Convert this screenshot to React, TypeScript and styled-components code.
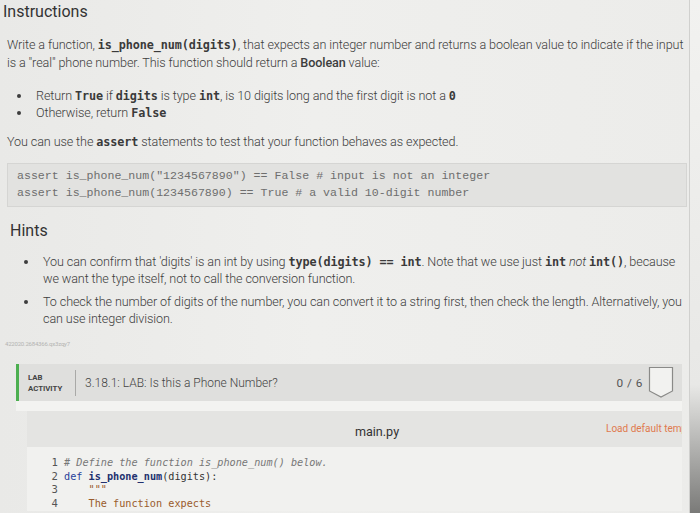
import React from 'react'
import styled, { createGlobalStyle } from 'styled-components'

const GlobalStyle = createGlobalStyle`
  html, body {
    margin: 0;
    padding: 0;
    background: #ebebe9;
  }
  body {
    font-family: Roboto, "Noto Sans", Arial, sans-serif;
    color: #3a3a3a;
    overflow: hidden;
  }
`

const Page = styled.div`
  display: flex;
  width: 700px;
  height: 513px;
  overflow: hidden;
  background: linear-gradient(90deg, #e9e9e7 0%, #efefed 45%, #ececea 100%);
`

const Content = styled.div`
  flex: 1;
  min-width: 0;
  padding-left: 3px;
`

const Edge = styled.div`
  width: 10px;
  border-left: 1px solid #d0d0ce;
  background: linear-gradient(180deg, #f2f2f0 0%, #e8e8e6 75%, #7a7a78 100%);
`

const Heading = styled.h2`
  margin: 0;
  padding-top: 2px;
  font-size: 16px;
  font-weight: 400;
  line-height: 20px;
  color: #333;
`

const Para = styled.p<{ $mt?: number }>`
  margin: ${({ $mt }) => $mt ?? 0}px 0 0 4px;
  font-size: 12.6px;
  font-weight: 300;
  line-height: 18px;
  color: #3d3d3d;
  letter-spacing: -0.1px;
`

const Code = styled.code`
  font-family: "DejaVu Sans Mono", monospace;
  font-size: 11.8px;
  font-weight: 700;
  line-height: 1;
  color: #3a3a3a;
`

const Bold = styled.b`
  font-weight: 500;
`

const List = styled.ul<{ $indent: number; $mt: number }>`
  margin: ${({ $mt }) => $mt}px 0 0 0;
  padding-left: ${({ $indent }) => $indent}px;
  list-style: disc;
  font-size: 12.6px;
  font-weight: 300;
  line-height: 17px;
  color: #3d3d3d;
  letter-spacing: -0.1px;
`

const Item = styled.li<{ $gap?: number }>`
  margin-top: ${({ $gap }) => $gap ?? 0}px;
  padding-left: 4px;
`

const CodeBlock = styled.pre`
  margin: 12px 2px 0 4px;
  padding: 3px 9px 5px;
  background: #e2e2e0;
  border: 1px solid #d5d5d3;
  font-family: "Liberation Mono", "Courier New", monospace;
  font-size: 11.6px;
  line-height: 17px;
  color: #6e6e6e;
`

const SubHeading = styled(Heading)`
  margin: 14px 0 0 7px;
  padding: 0;
`

const Stamp = styled.div`
  margin: 13px 0 0 2px;
  font-size: 6px;
  color: #b4b4b2;
  letter-spacing: -0.2px;
`

const Lab = styled.section`
  margin: 17px 7px 0 13px;
`

const LabHeader = styled.div`
  display: flex;
  align-items: center;
  height: 37px;
  background: #dfdfdd;
  border-left: 3px solid #4caf50;
  padding-right: 8px;
`

const Badge = styled.div`
  width: 47px;
  padding-left: 9px;
  font-size: 7.8px;
  font-weight: 700;
  line-height: 11px;
  color: #444;
`

const Divider = styled.div`
  width: 1px;
  height: 26px;
  background: #a9a9a7;
  margin-right: 9px;
`

const LabTitle = styled.div`
  flex: 1;
  font-size: 12px;
  font-weight: 300;
  color: #444;
`

const Score = styled.div`
  font-size: 11.8px;
  color: #555;
  margin-right: 5px;
  letter-spacing: 0.5px;
`

const Spacer = styled.div`
  height: 10px;
  background: #f3f3f1;
`

const Panel = styled.div`
  margin-left: 11px;
  background: #e4e4e2;
`

const FileBar = styled.div`
  display: flex;
  align-items: center;
  height: 36px;
  padding-top: 5px;
  box-sizing: border-box;
`

const FileName = styled.div`
  flex: 1;
  text-align: center;
  font-size: 12.6px;
  color: #333;
  padding-left: 121px;
`

const LoadLink = styled.div`
  width: 76px;
  overflow: hidden;
  white-space: nowrap;
  font-size: 10px;
  color: #e07a4e;
  margin-top: -7px;
`

const Editor = styled.div`
  display: flex;
  background: #f1f1ef;
  padding-top: 9px;
  font-family: "DejaVu Sans Mono", monospace;
  font-size: 10.2px;
  line-height: 13.7px;
`

const Gutter = styled.div`
  width: 31px;
  text-align: right;
  color: #555;
  padding-right: 6px;
  font-size: 10.6px;
`

const Lines = styled.div`
  flex: 1;
  white-space: pre;
`

const Comment = styled.span`
  font-style: italic;
  color: #777;
`

const Kw = styled.span`
  color: #2a3f9a;
`

const Fn = styled.span`
  color: #22306e;
  font-weight: 700;
`

const Plain = styled.span`
  color: #333;
`

const Doc = styled.span`
  color: #9a5b2c;
`

const ScoreBox = () => (
  <svg width="26" height="33" viewBox="0 0 26 33">
    <path d="M1.5 1.5 H24.5 V25 L13 31 L1.5 25 Z" fill="#f2f2f0" stroke="#8a8a88" strokeWidth="1.2" />
  </svg>
)

export default function App() {
  return (
    <>
      <GlobalStyle />
      <Page>
        <Content>
          <Heading>Instructions</Heading>
          <Para $mt={14}>
            Write a function, <Code>is_phone_num(digits)</Code>, that expects an integer number and returns a boolean value to indicate if the input
            is a "real" phone number. This function should return a <Bold>Boolean</Bold> value:
          </Para>
          <List $indent={29} $mt={15}>
            <Item>
              Return <Code>True</Code> if <Code>digits</Code> is type <Code>int</Code>, is 10 digits long and the first digit is not a <Code>0</Code>
            </Item>
            <Item>
              Otherwise, return <Code>False</Code>
            </Item>
          </List>
          <Para $mt={12}>
            You can use the <Code>assert</Code> statements to test that your function behaves as expected.
          </Para>
          <CodeBlock>
            {'assert is_phone_num("1234567890") == False # input is not an integer\n'}
            {'assert is_phone_num(1234567890) == True # a valid 10-digit number'}
          </CodeBlock>
          <SubHeading>Hints</SubHeading>
          <List $indent={36} $mt={12}>
            <Item>
              You can confirm that 'digits' is an int by using <Code>type(digits) == int</Code>. Note that we use just <Code>int</Code> <i>not</i> <Code>int()</Code>, because
              we want the type itself, not to call the conversion function.
            </Item>
            <Item $gap={6}>
              To check the number of digits of the number, you can convert it to a string first, then check the length. Alternatively, you
              can use integer division.
            </Item>
          </List>
          <Stamp>422020.2684366.qx3zqy7</Stamp>
          <Lab>
            <LabHeader>
              <Badge>
                LAB
                <br />
                ACTIVITY
              </Badge>
              <Divider />
              <LabTitle>3.18.1: LAB: Is this a Phone Number?</LabTitle>
              <Score>0 / 6</Score>
              <ScoreBox />
            </LabHeader>
            <Spacer />
            <Panel>
              <FileBar>
                <FileName>main.py</FileName>
                <LoadLink>Load default template...</LoadLink>
              </FileBar>
              <Editor>
                <Gutter>
                  1<br />2<br />3<br />4
                </Gutter>
                <Lines>
                  <Comment># Define the function is_phone_num() below.</Comment>
                  {'\n'}
                  <Kw>def </Kw>
                  <Fn>is_phone_num</Fn>
                  <Plain>(digits):</Plain>
                  {'\n'}
                  <Doc>{'    """'}</Doc>
                  {'\n'}
                  <Doc>{'    The function expects'}</Doc>
                </Lines>
              </Editor>
            </Panel>
          </Lab>
        </Content>
        <Edge />
      </Page>
    </>
  )
}
